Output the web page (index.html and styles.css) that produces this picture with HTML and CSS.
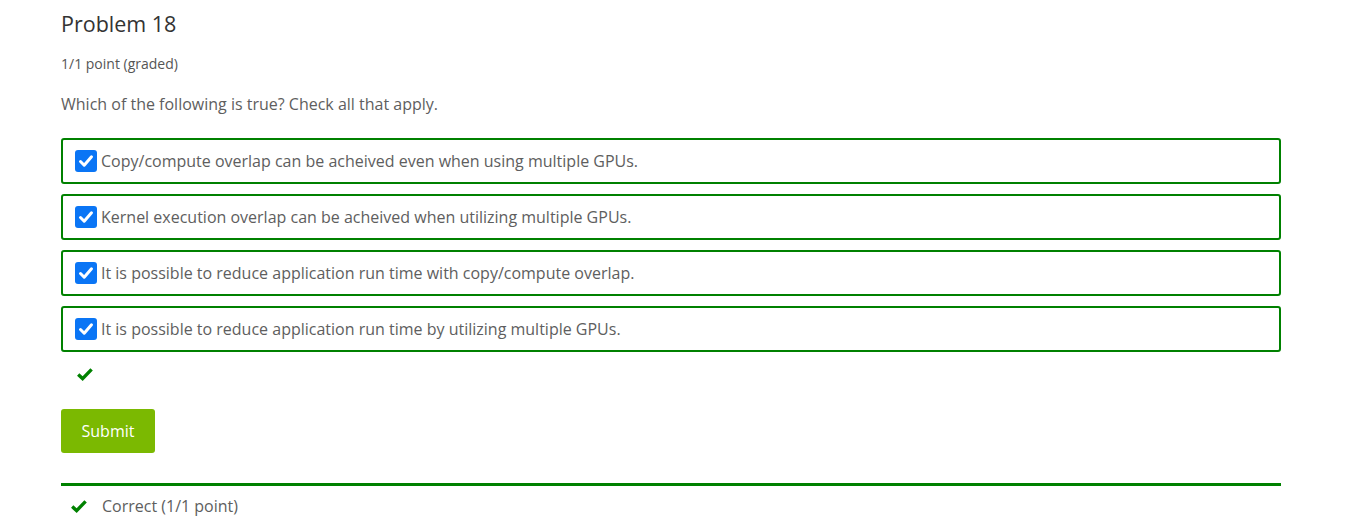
FILE: index.html
```html
<!DOCTYPE html>
<html>
<head>
<meta charset="utf-8">
<link rel="stylesheet" href="styles.css">
</head>
<body>
<div class="problem">
  <h3 class="title">Problem 18</h3>
  <div class="points">1/1 point (graded)</div>
  <p class="question">Which of the following is true? Check all that apply.</p>
  <div class="choices">
    <label class="choice"><span class="cbox"><svg viewBox="0 0 22 22" width="22" height="22"><path d="M5.5 11.5 L9.2 15.2 L16.5 6.8" fill="none" stroke="#fff" stroke-width="3" stroke-linecap="round" stroke-linejoin="round"/></svg></span><span class="ctext">Copy/compute overlap can be acheived even when using multiple GPUs.</span></label>
    <label class="choice"><span class="cbox"><svg viewBox="0 0 22 22" width="22" height="22"><path d="M5.5 11.5 L9.2 15.2 L16.5 6.8" fill="none" stroke="#fff" stroke-width="3" stroke-linecap="round" stroke-linejoin="round"/></svg></span><span class="ctext">Kernel execution overlap can be acheived when utilizing multiple GPUs.</span></label>
    <label class="choice"><span class="cbox"><svg viewBox="0 0 22 22" width="22" height="22"><path d="M5.5 11.5 L9.2 15.2 L16.5 6.8" fill="none" stroke="#fff" stroke-width="3" stroke-linecap="round" stroke-linejoin="round"/></svg></span><span class="ctext">It is possible to reduce application run time with copy/compute overlap.</span></label>
    <label class="choice"><span class="cbox"><svg viewBox="0 0 22 22" width="22" height="22"><path d="M5.5 11.5 L9.2 15.2 L16.5 6.8" fill="none" stroke="#fff" stroke-width="3" stroke-linecap="round" stroke-linejoin="round"/></svg></span><span class="ctext">It is possible to reduce application run time by utilizing multiple GPUs.</span></label>
  </div>
  <div class="status"><svg class="tick" viewBox="0 0 16 14" width="16" height="14"><path d="M1.2 7.6 L5.6 11.6 L14.6 2.4" fill="none" stroke="#008100" stroke-width="3.4" stroke-linejoin="miter"/></svg></div>
  <button class="submit">Submit</button>
  <div class="notice">
    <svg class="tick" viewBox="0 0 16 14" width="16" height="14"><path d="M1.2 7.6 L5.6 11.6 L14.6 2.4" fill="none" stroke="#008100" stroke-width="3.4" stroke-linejoin="miter"/></svg>
    <span class="notice-text">Correct (1/1 point)</span>
  </div>
</div>
</body>
</html>
```
FILE: styles.css
```css
html, body {
  margin: 0;
  padding: 0;
  background: #fff;
}
body {
  font-family: "Open Sans", "Liberation Sans", sans-serif;
  color: #5e5e5e;
}
.problem {
  width: 1220px;
  margin-left: 61px;
  padding-top: 9px;
}
.title {
  margin: 0;
  font-size: 21.5px;
  font-weight: 400;
  line-height: 30px;
  color: #333;
}
.points {
  margin-top: 15px;
  font-size: 14px;
  line-height: 19px;
  color: #555;
}
.question {
  margin: 20px 0 0;
  font-size: 16px;
  line-height: 22px;
  color: #5e5e5e;
}
.choices {
  margin-top: 23px;
  display: flex;
  flex-direction: column;
  gap: 10px;
}
.choice {
  display: flex;
  align-items: center;
  height: 46px;
  box-sizing: border-box;
  border: 2px solid #008100;
  border-radius: 3px;
  padding: 0 12px;
  font-size: 16px;
  color: #5e5e5e;
}
.cbox {
  width: 22px;
  height: 22px;
  border-radius: 3px;
  background: #0a75f5;
  display: flex;
  margin-right: 4px;
  flex: none;
}
.status {
  height: 26px;
  margin-top: 15px;
  padding-left: 16px;
}
.tick {
  display: block;
}
.submit {
  margin-top: 16px;
  display: block;
  width: 94px;
  height: 44px;
  border: none;
  border-radius: 3px;
  background: #7bb901;
  color: #fff;
  font-family: "Open Sans", "Liberation Sans", sans-serif;
  font-size: 16px;
  padding: 0;
}
.notice {
  margin-top: 30px;
  border-top: 3px solid #008100;
  display: flex;
  align-items: center;
  height: 40px;
  padding-left: 10px;
}
.notice .tick {
  margin-right: 15px;
}
.notice-text {
  font-size: 16px;
  color: #5e5e5e;
}
```
